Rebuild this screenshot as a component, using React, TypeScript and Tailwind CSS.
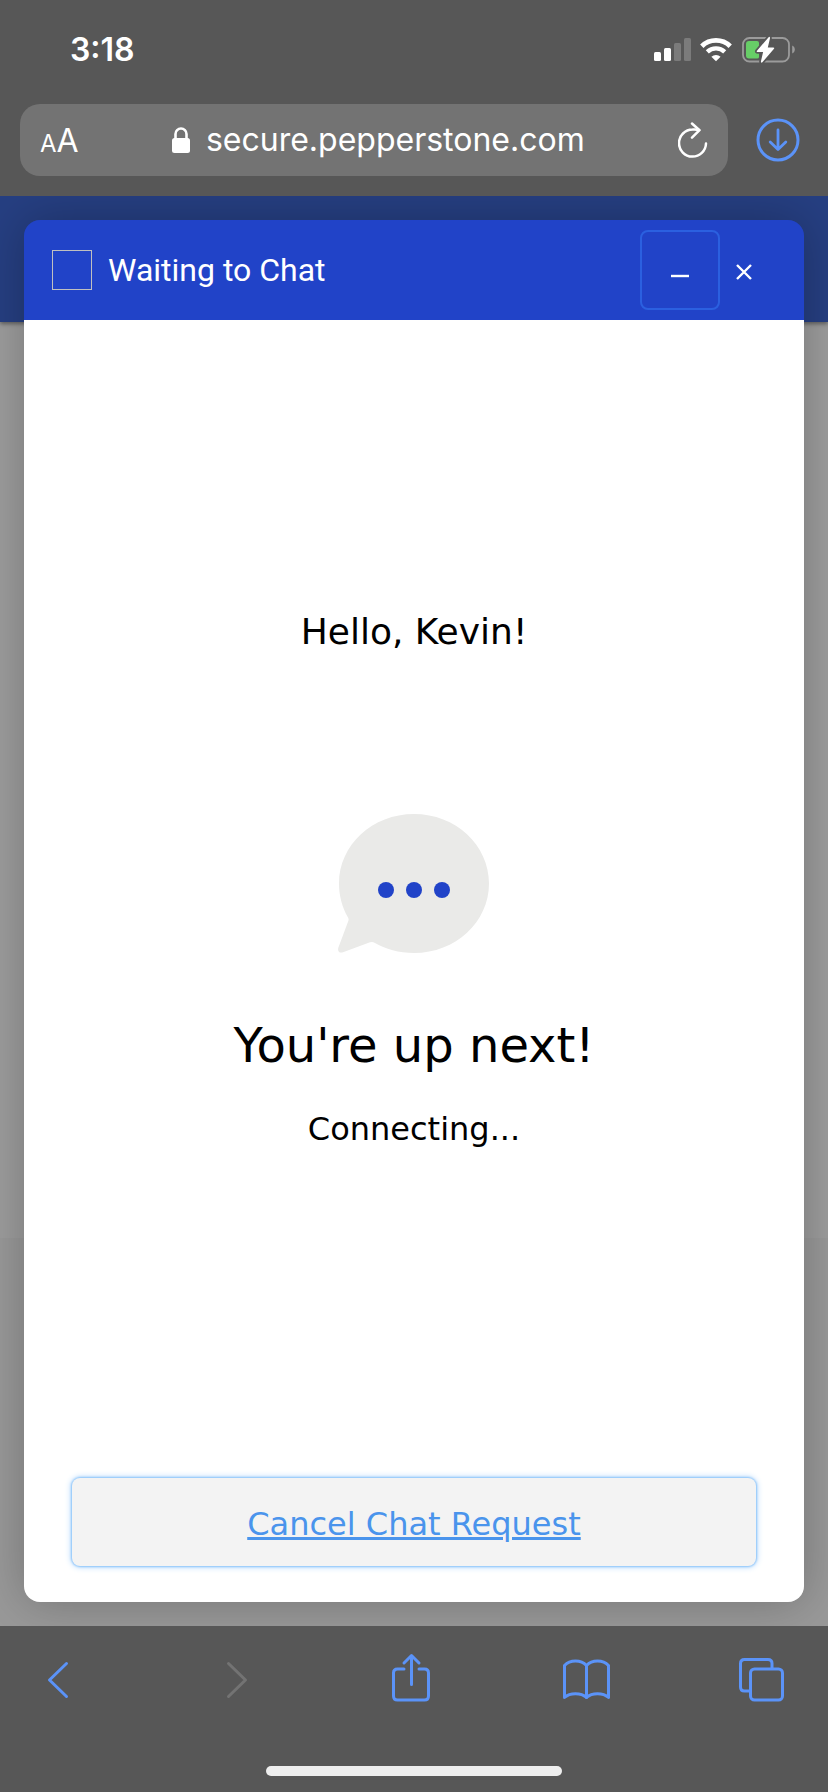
import { memo } from "react";

interface IIcon {
  className?: string;
}

const IconSignal: React.FC<IIcon> = ({ className }) => (
  <svg className={className} width="38" height="26" viewBox="0 0 38 26" fill="#fff">
    <rect x="0" y="15" width="7" height="9" rx="1.5" />
    <rect x="10" y="11" width="7" height="13" rx="1.5" />
    <rect x="20" y="6" width="7" height="18" rx="1.5" fill="#7b7b7b" />
    <rect x="30" y="1" width="7" height="23" rx="1.5" fill="#7b7b7b" />
  </svg>
);

const IconWifi: React.FC<IIcon> = ({ className }) => (
  <svg className={className} width="32" height="26" viewBox="0 0 32 26" fill="none" stroke="#fff">
    <path d="M1.8 9.2a20.3 20.3 0 0 1 28.4 0" strokeWidth="4.8" />
    <path d="M7.3 14.9a12.6 12.6 0 0 1 17.4 0" strokeWidth="4.4" />
    <path d="M11.4 19.7a6.8 6.8 0 0 1 9.2 0L16 24.2z" fill="#fff" stroke="none" />
  </svg>
);

const IconBattery: React.FC<IIcon> = ({ className }) => (
  <svg className={className} width="54" height="28" viewBox="0 0 54 28" fill="none">
    <rect x="1" y="2" width="46" height="23.500" rx="6.500" stroke="#9b9b9b" strokeWidth="1.800" />
    <path d="M50.200 9.500c1.700.7 2.600 2.200 2.600 4s-.9 3.300-2.600 4z" fill="#9b9b9b" />
    <path d="M7 5h8q2 0 2 2v14q0 1.500-2 1.500H7q-3 0-3-3V8q0-3 3-3z" fill="#67ce67" />
    <path
      d="M26.600 1.200 15 14.800q-.8 1.200.8 1.200h5.300l-2.200 9.600q0 1.700 1.500.6L32 12.800q.8-1.300-.8-1.300h-5.400l2.200-9.300q0-2-1.400-1z"
      fill="#fff"
      stroke="#575757"
      strokeWidth="3.600"
      paintOrder="stroke"
    />
  </svg>
);

const IconLock: React.FC<IIcon> = ({ className }) => (
  <svg className={className} width="18" height="26" viewBox="0 0 18 26" fill="none">
    <rect x="0" y="11" width="18" height="15" rx="2.500" fill="#fff" />
    <path d="M3.500 12V7a5.500 5.500 0 0 1 11 0v5" stroke="#fff" strokeWidth="2.600" />
  </svg>
);

const IconReload: React.FC<IIcon> = () => (
  <svg
    width="30"
    height="36"
    viewBox="0 0 30 36"
    fill="none"
    stroke="#fff"
    strokeWidth="2.500"
    strokeLinecap="round"
    strokeLinejoin="round"
  >
    <path d="M28 21.500A13.500 13.500 0 1 1 14.500 7.600q3.500-.3 6.500.4" />
    <path d="m14 1.500 7.500 6.700-7.500 7.400" />
  </svg>
);

const IconDownload: React.FC<IIcon> = () => (
  <svg
    width="44"
    height="44"
    viewBox="0 0 44 44"
    fill="none"
    stroke="#5b93f8"
    strokeWidth="3"
    strokeLinecap="round"
    strokeLinejoin="round"
  >
    <circle cx="22" cy="22" r="20" />
    <path d="M22 12v19M14.200 24l7.800 7.500 7.800-7.500" strokeWidth="2.800" />
  </svg>
);

const IconBubble: React.FC<IIcon> = () => (
  <svg width="152" height="139" viewBox="0 0 152 139">
    <path
      d="M76 0c41.500 0 75 31 75 69.500S117.500 139 76 139c-15 0-28.500-4-39.500-10.300q-2-1.200-4.500-.4L5 138.200c-3.500 1.300-5.800-1-4.600-4.600L10.300 107q.7-1.700-.3-3.500C4.300 93.500 1 82 1 69.500 1 31 34.500 0 76 0z"
      fill="#eaeae8"
    />
    <g fill="#2143c8">
      <circle cx="48" cy="76" r="8" />
      <circle cx="76" cy="76" r="8" />
      <circle cx="104" cy="76" r="8" />
    </g>
  </svg>
);

const TOOLBAR = [
  {
    label: "Back",
    color: "text-[#5b93f8]",
    icon: <path d="M32.500 7.500 15.500 24l17 16.500" />,
  },
  {
    label: "Forward",
    color: "text-[#737373]",
    icon: <path d="m18.500 7.500 17 16.500-17 16.500" />,
  },
  {
    label: "Share",
    color: "text-[#5b93f8]",
    icon: (
      <>
        <path d="M18 13h-6.500q-4 0-4 4v23q0 4 4 4h27q4 0 4-4V17q0-4-4-4H33" />
        <path d="M25.500 28.500V-.5M18 7l7.500-7.500L33 7" />
      </>
    ),
  },
  {
    label: "Bookmarks",
    color: "text-[#5b93f8]",
    icon: (
      <>
        <path d="M24.500 9.500C19 3.500 8 3.500 2.500 9.500v32c5.500-5 16.500-5 22 0 5.500-5 16.500-5 22 0v-32c-5.500-6-16.500-6-22 0z" />
        <path d="M24.500 9.500v32" />
      </>
    ),
  },
  {
    label: "Tabs",
    color: "text-[#5b93f8]",
    icon: (
      <>
        <rect x="12.500" y="13" width="32" height="31" rx="4" />
        <path d="M34 12V7.500q0-4-4-4H6.500q-4 0-4 4V31q0 4 4 4H11" />
      </>
    ),
  },
];

const BrowserHeader: React.FC = () => {
  return (
    <header className="bg-[#575757] pb-5 text-white">
      <div className="flex h-[104px] items-center justify-between pr-8 pb-1 pl-[70px] font-[Inter,sans-serif]">
        <span className="text-[32px] leading-10 font-semibold">3:18</span>
        <div className="flex items-center">
          <IconSignal className="mr-2" />
          <IconWifi className="mr-[10px]" />
          <IconBattery />
        </div>
      </div>
      <div className="flex items-center pr-7 pl-5">
        <div className="flex h-[72px] flex-1 items-center rounded-[20px] bg-[#737373] px-5 font-[Inter,sans-serif]">
          <button type="button" aria-label="Page settings" className="flex items-baseline pt-1 leading-10">
            <span className="text-[24px]">A</span>
            <span className="text-[32px]">A</span>
          </button>
          <div className="flex flex-1 items-center justify-center">
            <IconLock className="mr-4" />
            <span className="text-[32px] leading-10">secure.pepperstone.com</span>
          </div>
          <button type="button" aria-label="Reload">
            <IconReload />
          </button>
        </div>
        <button type="button" aria-label="Downloads" className="ml-7">
          <IconDownload />
        </button>
      </div>
    </header>
  );
};

const ChatWindow: React.FC = () => {
  return (
    <section className="z-10 col-start-1 row-start-1 m-6 flex flex-col rounded-2xl shadow-[0_0_48px_rgba(0,0,0,0.25)]">
      <div className="flex h-[100px] items-center rounded-t-2xl bg-[#2143c8] pr-9 pl-7 text-white">
        <span className="size-10 border border-[#c0c0c0]" />
        <h1 className="ml-4 flex-1 font-[Roboto,sans-serif] text-[32px] leading-10">
          Waiting to Chat
        </h1>
        <button
          type="button"
          aria-label="Minimize"
          className="flex size-20 items-center justify-center rounded-lg border-2 border-[#2b60e0]"
        >
          <svg width="20" height="20" viewBox="0 0 20 20" stroke="#fff" strokeWidth="2.400">
            <path d="M1 16h18" />
          </svg>
        </button>
        <button type="button" aria-label="Close" className="flex h-20 w-12 items-center justify-center">
          <svg width="16" height="20" viewBox="0 0 16 20" stroke="#fff" strokeWidth="2.400">
            <path d="m1 5 14 14M15 5 1 19" />
          </svg>
        </button>
      </div>
      <div className="flex flex-1 flex-col rounded-b-2xl bg-white px-12 pb-9 font-['DejaVu_Sans',sans-serif] text-black">
        <div className="flex flex-1 flex-col items-center justify-center pb-10">
          <p className="text-[36px] leading-[44px]">Hello, Kevin!</p>
          <div className="mt-40">
            <IconBubble />
          </div>
          <h2 className="mt-16 text-[48px] leading-[56px]">You're up next!</h2>
          <p className="mt-9 text-[32px] leading-10">Connecting...</p>
        </div>
        <button
          type="button"
          className="h-[88px] rounded-lg bg-[#f3f3f3] pt-1 text-[32px] text-[#4a94ec] underline shadow-[0_0_2px_1px_#8ec5fa,0_0_6px_1px_#b5d9fc]"
        >
          Cancel Chat Request
        </button>
      </div>
    </section>
  );
};

const App: React.FC = () => {
  return (
    <div className="flex min-h-screen flex-col">
      <BrowserHeader />
      <main className="grid flex-1 overflow-hidden">
        {/* dimmed page behind the chat window */}
        <div className="col-start-1 row-start-1 flex flex-col bg-[#9d9d9d]">
          <div className="h-[126px] bg-[#263f82] shadow-[0_2px_4px_rgba(0,0,0,0.4)]" />
          <div className="flex-1" />
          <div className="h-[388px] bg-[#999999]" />
        </div>
        <ChatWindow />
      </main>
      <footer className="bg-[#575757] pb-4">
        <nav className="flex justify-between pt-[30px] pr-[42px] pl-[34px]">
          {TOOLBAR.map(({ label, color, icon }) => (
            <button key={label} type="button" aria-label={label} className={color}>
              <svg
                className="overflow-visible"
                width="48"
                height="48"
                viewBox="0 0 48 48"
                fill="none"
                stroke="currentColor"
                strokeWidth="3"
                strokeLinecap="round"
                strokeLinejoin="round"
              >
                {icon}
              </svg>
            </button>
          ))}
        </nav>
        <div className="mx-auto mt-[62px] h-[10px] w-[296px] rounded-full bg-[#eeeeee]" />
      </footer>
    </div>
  );
};
export default memo(App);
